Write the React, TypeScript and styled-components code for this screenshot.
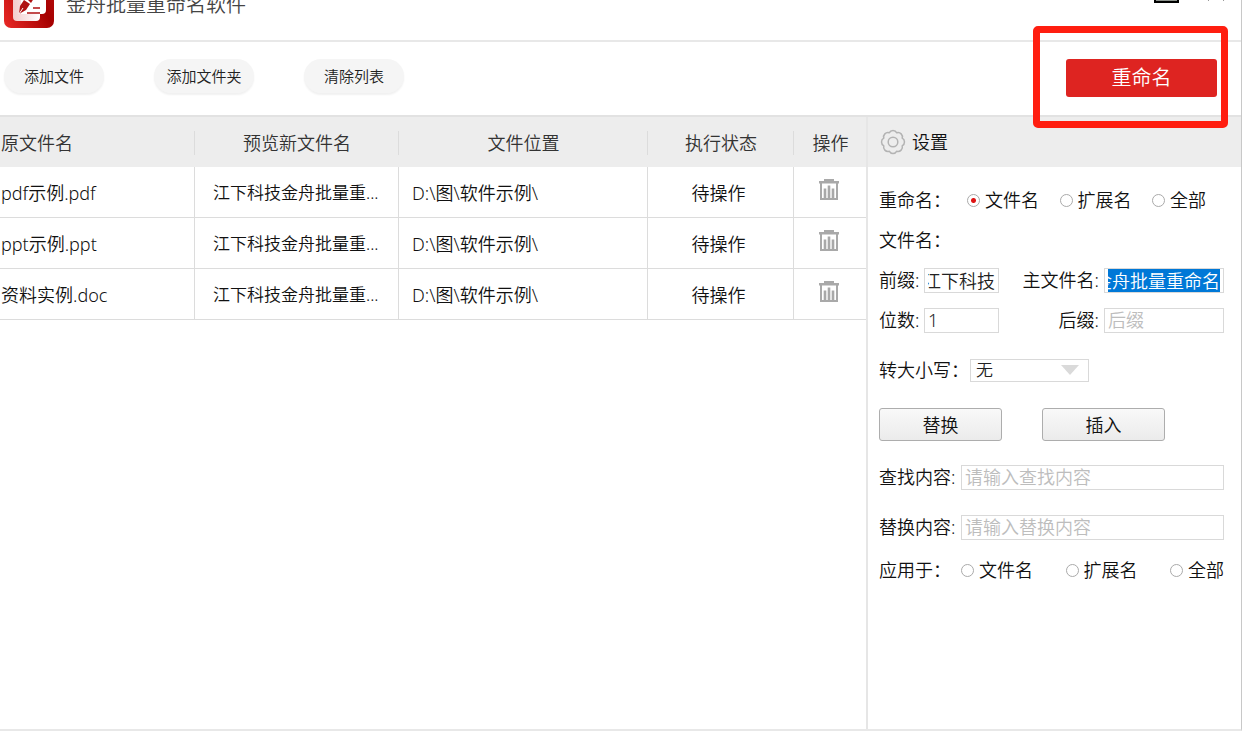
import React, { useEffect, useRef } from "react";
import styled, { createGlobalStyle, css } from "styled-components";

const GlobalStyle = createGlobalStyle`
  *, *::before, *::after { box-sizing: border-box; }
  body {
    margin: 0;
    background: #fff;
    color: #111;
    font-family: "Noto Sans", "Noto Sans CJK SC", sans-serif;
    font-size: 18px;
    font-weight: 350;
    line-height: 24px;
  }
  button, input, select { font: inherit; color: inherit; margin: 0; }
`;

const Window = styled.div`
  display: flex;
  flex-direction: column;
  min-height: calc(100vh - 2px);
  margin-right: 1px;
  margin-bottom: 2px;
  border-right: 1px solid #c8c8c8;
  border-bottom: 2px solid #e8e8e8;
`;

const TitleBar = styled.header`
  display: flex;
  align-items: flex-end;
  justify-content: space-between;
  height: 42px;
  padding: 0 9px 12px 4px;
  overflow: hidden;
  border-bottom: 2px solid #e8e8e8;
`;

const Brand = styled.div`
  display: flex;
  align-items: center;
  gap: 12px;
  height: 50px;
  flex: none;
`;

const Title = styled.h1`
  margin: 0;
  padding-top: 3px;
  font-size: 20px;
  font-weight: inherit;
  line-height: 28px;
  color: #444;
`;

const WindowControls = styled.div`
  display: flex;
  gap: 28px;
  height: 50px;
`;

const ControlButton = styled.button`
  width: 25px;
  height: 25px;
  padding: 0;
  border: 0;
  background: none;
  line-height: 0;
  text-align: left;
`;

const Toolbar = styled.div`
  display: flex;
  align-items: flex-start;
  gap: 50px;
  height: 73px;
  padding: 17px 24px 0 4px;
`;

const PillButton = styled.button`
  width: 100px;
  height: 34px;
  padding: 0;
  border: 0;
  border-radius: 17px;
  background: #f5f5f5;
  box-shadow: 0 2px 2px rgba(0, 0, 0, 0.06);
  font-size: 15px;
  color: #222;
`;

const PrimaryArea = styled.div`
  position: relative;
  margin-left: auto;
`;

const PrimaryButton = styled.button`
  display: block;
  width: 151px;
  height: 38px;
  padding: 0;
  border: 0;
  border-radius: 3px;
  background: #de2421;
  color: #fff;
  font-size: 20px;
`;

const Highlight = styled.span`
  position: absolute;
  inset: -33px -11px -31px -33px;
  border: 7px solid #ff1e10;
  border-radius: 5px;
  pointer-events: none;
`;

const Content = styled.div`
  display: flex;
  flex: 1;
  border-top: 2px solid #e2e2e2;
`;

const FileArea = styled.main`
  flex: 1;
  min-width: 0;
`;

const FileTable = styled.table`
  width: 100%;
  table-layout: fixed;
  border-collapse: separate;
  border-spacing: 0;
`;

const HeadCell = styled.th<{ $width?: number; $left?: boolean }>`
  ${(p) => p.$width && `width: ${p.$width}px;`}
  height: 50px;
  padding: 2px 0 0;
  background: #ededed;
  color: #333;
  font-weight: inherit;
  text-align: ${(p) => (p.$left ? "left" : "center")};
  &:not(:last-child) > span { border-right: 1px solid #dcdcdc; }
`;

const HeadLabel = styled.span`
  display: block;
  padding-left: 1px;
`;

const Cell = styled.td<{ $kind?: "name" | "preview" | "path" }>`
  height: 51px;
  padding: 1px 0 0;
  overflow: hidden;
  border-bottom: 1px solid #dcdcdc;
  text-align: center;
  white-space: nowrap;
  &:not(:last-child) { border-right: 1px solid #dcdcdc; }
  ${(p) => p.$kind === "name" && css`padding-left: 1px; text-align: left;`}
  ${(p) => p.$kind === "preview" && css`padding-left: 18px; text-align: left; font-size: 17px;`}
  ${(p) => p.$kind === "path" && css`padding-left: 13px; text-align: left;`}
`;

const Status = styled.span`
  padding-right: 4px;
`;

const DeleteButton = styled.button`
  padding: 0 2px 6px 0;
  border: 0;
  background: none;
  line-height: 0;
  vertical-align: middle;
`;

const Sidebar = styled.aside`
  flex: none;
  width: 375px;
  border-left: 2px solid #e6e6e6;
`;

const SidebarHead = styled.h2`
  display: flex;
  align-items: center;
  gap: 6px;
  height: 50px;
  margin: 0;
  padding-left: 12px;
  background: #ededed;
  font-size: 18px;
  font-weight: inherit;
`;

const Form = styled.form`
  padding: 20px 17px 0 11px;
`;

const Row = styled.div<{ $after?: number }>`
  display: flex;
  align-items: center;
  height: 26px;
  margin-bottom: ${(p) => p.$after ?? 14}px;
`;

const Label = styled.label<{ $width?: number }>`
  flex: none;
  width: ${(p) => (p.$width ? `${p.$width}px` : "auto")};
  white-space: nowrap;
`;

const EndLabel = styled.label`
  flex: 1;
  padding-right: 5px;
  text-align: right;
`;

const TextInput = styled.input<{ $width?: number; $selected?: boolean }>`
  ${(p) => (p.$width ? `flex: none; width: ${p.$width}px;` : "flex: 1; min-width: 0;")}
  height: 25px;
  padding: 0 3px;
  border: 1px solid #d9d9d9;
  border-radius: 0;
  background: #fff;
  outline: none;
  color: #222;
  &::placeholder { color: #bdbdbd; opacity: 1; }
  ${(p) => p.$selected && css`
    background: #0078d7 content-box;
    color: #fff;
  `}
`;

const RadioGroup = styled.div<{ $spread?: boolean }>`
  display: flex;
  flex: 1;
  justify-content: space-between;
  padding-right: ${(p) => (p.$spread ? 0 : 18)}px;
`;

const RadioLabel = styled.label`
  display: flex;
  align-items: center;
  gap: 5px;
`;

const Radio = styled.input`
  appearance: none;
  width: 13px;
  height: 13px;
  border: 1px solid #aaa;
  border-radius: 50%;
  background: #fff;
  &:checked { background: radial-gradient(circle, #de1414 0 2px, #fff 3px); }
`;

const SelectBox = styled.span`
  position: relative;
  display: flex;
  width: 119px;
  height: 23px;
  &::after {
    content: "";
    position: absolute;
    top: 6px;
    right: 10px;
    border: 9px solid transparent;
    border-top: 10px solid #dadada;
    border-bottom: 0;
    pointer-events: none;
  }
`;

const Select = styled.select`
  appearance: none;
  width: 100%;
  padding: 0 5px;
  border: 1px solid #d9d9d9;
  border-radius: 0;
  background: #fff;
  font-size: 17px;
  line-height: 20px;
  color: #222;
`;

const Actions = styled.div`
  display: flex;
  gap: 40px;
  padding-top: 1px;
  margin-bottom: 23px;
`;

const ActionButton = styled.button`
  width: 123px;
  height: 33px;
  padding: 0;
  border: 1px solid #adadad;
  border-radius: 3px;
  background: linear-gradient(#f9f9f9, #ebebeb);
`;

const Logo = () => (
  <svg width="50" height="50" viewBox="0 0 50 50" aria-hidden="true">
    <defs>
      <linearGradient id="logoRed" x1="0" y1="1" x2="1" y2="0.5">
        <stop offset="0" stopColor="#ea2a27" />
        <stop offset="0.8" stopColor="#a50000" />
        <stop offset="1" stopColor="#b00808" />
      </linearGradient>
      <linearGradient id="logoPaper" x1="0" y1="0" x2="1" y2="0">
        <stop offset="0" stopColor="#f3cccc" />
        <stop offset="1" stopColor="#fff" />
      </linearGradient>
    </defs>
    <rect width="50" height="50" rx="7" fill="url(#logoRed)" />
    <path d="M9 12h27v27q0 4-4 4H13q-4 0-4-4z" fill="url(#logoPaper)" />
    <path d="M17 7h25v25q0 4-4 4H17z" fill="#fff" />
    <path d="M15 36l1-8 4-6 6 4-4 6z" fill="#b01010" />
    <path d="M22 20L31 6l6 3-10 16z" fill="#b01010" />
    <path d="M24 22l9-14" stroke="#fff" strokeWidth="1" />
    <path d="M15 36l4-6" stroke="#fff" strokeWidth="1" />
    <path d="M23 35h13M29 30h7" stroke="#b01010" strokeWidth="1.6" />
  </svg>
);

const GearIcon = () => (
  <svg width="26" height="26" viewBox="0 0 26 26" fill="none" stroke="#b3b3b3" strokeWidth="1.5" aria-hidden="true">
    <path
      strokeLinejoin="round"
      d="M22.2 9.2A4.3 4.3 0 0 1 22.2 16.8A4.3 4.3 0 0 1 16.8 22.2A4.3 4.3 0 0 1 9.2 22.2A4.3 4.3 0 0 1 3.8 16.8A4.3 4.3 0 0 1 3.8 9.2A4.3 4.3 0 0 1 9.2 3.8A4.3 4.3 0 0 1 16.8 3.8A4.3 4.3 0 0 1 22.2 9.2Z"
    />
    <circle cx="13" cy="13" r="4.8" />
  </svg>
);

const TrashIcon = () => (
  <svg width="20" height="21" viewBox="0 0 20 21" fill="#a9a9a9" aria-hidden="true">
    <path d="M5 0h10v2h5v2.500h-1V21H1V4.500H0V2h5zM3 4.500v14.500h14V4.500z" fillRule="evenodd" />
    <path d="M4.700 9.500h2.600V19H4.700zM8.700 6.500h2.600V19H8.700zM12.700 9.500h2.600V19h-2.600z" />
  </svg>
);

const files = ["pdf示例.pdf", "ppt示例.ppt", "资料实例.doc"];
const targets = ["文件名", "扩展名", "全部"];

export default function App() {
  const prefix = useRef<HTMLInputElement>(null);
  const mainName = useRef<HTMLInputElement>(null);

  // Long values show their end, where the caret was left.
  useEffect(() => {
    [prefix.current, mainName.current].forEach((el) => {
      if (el) el.scrollLeft = el.scrollWidth;
    });
  }, []);

  return (
    <>
      <GlobalStyle />
      <Window>
        <TitleBar>
          <Brand>
            <Logo />
            <Title>金舟批量重命名软件</Title>
          </Brand>
          <WindowControls>
            <ControlButton type="button" aria-label="最大化">
              <svg width="25" height="25" viewBox="0 0 25 25" aria-hidden="true">
                <rect x="1" y="1" width="23" height="23" fill="#8b918b" stroke="#000" strokeWidth="2" />
              </svg>
            </ControlButton>
            <ControlButton type="button" aria-label="关闭">
              <svg width="18" height="25" viewBox="0 0 18 25" stroke="#999" strokeWidth="1" aria-hidden="true">
                <path d="M1 6l16 17M17 6L1 23" />
              </svg>
            </ControlButton>
          </WindowControls>
        </TitleBar>

        <Toolbar>
          <PillButton type="button">添加文件</PillButton>
          <PillButton type="button">添加文件夹</PillButton>
          <PillButton type="button">清除列表</PillButton>
          <PrimaryArea>
            <PrimaryButton type="button">重命名</PrimaryButton>
            <Highlight />
          </PrimaryArea>
        </Toolbar>

        <Content>
          <FileArea>
            <FileTable>
              <thead>
                <tr>
                  <HeadCell $left><HeadLabel>原文件名</HeadLabel></HeadCell>
                  <HeadCell $width={204}><HeadLabel>预览新文件名</HeadLabel></HeadCell>
                  <HeadCell $width={249}><HeadLabel>文件位置</HeadLabel></HeadCell>
                  <HeadCell $width={146}><HeadLabel>执行状态</HeadLabel></HeadCell>
                  <HeadCell $width={72}><HeadLabel>操作</HeadLabel></HeadCell>
                </tr>
              </thead>
              <tbody>
                {files.map((name) => (
                  <tr key={name}>
                    <Cell $kind="name">{name}</Cell>
                    <Cell $kind="preview">江下科技金舟批量重...</Cell>
                    <Cell $kind="path">D:\图\软件示例\</Cell>
                    <Cell><Status>待操作</Status></Cell>
                    <Cell>
                      <DeleteButton type="button" aria-label={`删除 ${name}`}>
                        <TrashIcon />
                      </DeleteButton>
                    </Cell>
                  </tr>
                ))}
              </tbody>
            </FileTable>
          </FileArea>

          <Sidebar>
            <SidebarHead>
              <GearIcon />
              设置
            </SidebarHead>
            <Form onSubmit={(e) => e.preventDefault()}>
              <Row role="radiogroup" aria-labelledby="scope">
                <Label as="span" id="scope" $width={88}>重命名：</Label>
                <RadioGroup>
                  {targets.map((t, i) => (
                    <RadioLabel key={t}>
                      <Radio type="radio" name="scope" defaultChecked={i === 0} />
                      {t}
                    </RadioLabel>
                  ))}
                </RadioGroup>
              </Row>
              <Row>文件名：</Row>
              <Row>
                <Label htmlFor="prefix" $width={45}>前缀:</Label>
                <TextInput id="prefix" ref={prefix} $width={75} defaultValue="江下科技" />
                <EndLabel htmlFor="mainName">主文件名:</EndLabel>
                <TextInput id="mainName" ref={mainName} $width={120} $selected defaultValue="金舟批量重命名" />
              </Row>
              <Row $after={24}>
                <Label htmlFor="digits" $width={45}>位数:</Label>
                <TextInput id="digits" $width={75} defaultValue="1" />
                <EndLabel htmlFor="suffix">后缀:</EndLabel>
                <TextInput id="suffix" $width={120} placeholder="后缀" />
              </Row>
              <Row $after={24}>
                <Label htmlFor="letterCase" $width={91}>转大小写：</Label>
                <SelectBox>
                  <Select id="letterCase">
                    <option>无</option>
                  </Select>
                </SelectBox>
              </Row>
              <Actions>
                <ActionButton type="button">替换</ActionButton>
                <ActionButton type="button">插入</ActionButton>
              </Actions>
              <Row $after={24}>
                <Label htmlFor="find" $width={82}>查找内容:</Label>
                <TextInput id="find" placeholder="请输入查找内容" />
              </Row>
              <Row $after={17}>
                <Label htmlFor="replace" $width={82}>替换内容:</Label>
                <TextInput id="replace" placeholder="请输入替换内容" />
              </Row>
              <Row role="radiogroup" aria-labelledby="apply">
                <Label as="span" id="apply" $width={82}>应用于：</Label>
                <RadioGroup $spread>
                  {targets.map((t) => (
                    <RadioLabel key={t}>
                      <Radio type="radio" name="apply" />
                      {t}
                    </RadioLabel>
                  ))}
                </RadioGroup>
              </Row>
            </Form>
          </Sidebar>
        </Content>
      </Window>
    </>
  );
}
